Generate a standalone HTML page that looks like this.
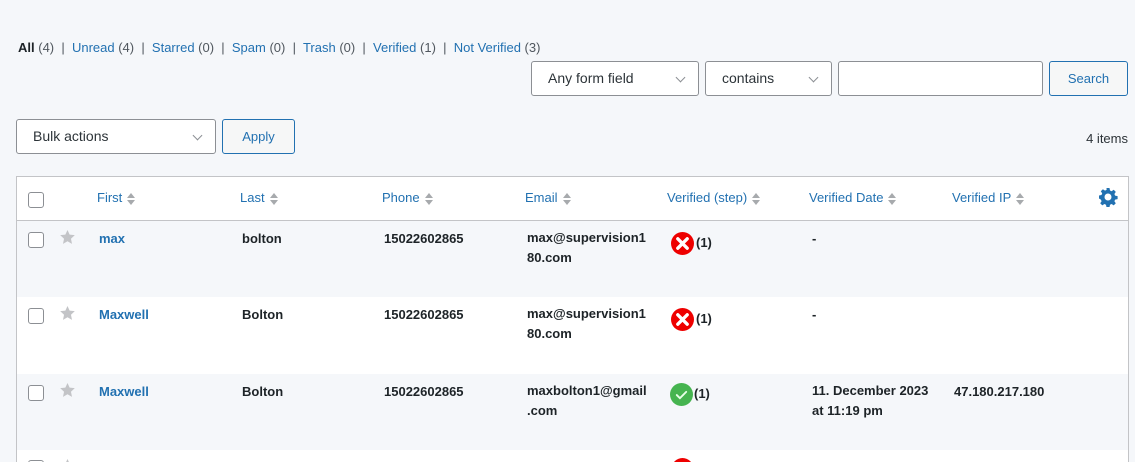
<!DOCTYPE html><html style="width:1135px;height:462px;overflow:hidden"><head><style>
*{box-sizing:border-box;margin:0;padding:0}
body{width:1135px;height:462px;overflow:hidden;background:#f5f7fa;font-family:"Liberation Sans",sans-serif;font-size:13px;color:#1d2327;position:relative}
.a{position:absolute;white-space:nowrap}
a{color:#2271b1;text-decoration:none}
.inp,.sel{position:absolute;background:#fff;border:1px solid #8c8f94;border-radius:3px;height:35px;font-size:14px;padding:8px 16px;color:#2c3338}
.sel:after{content:"";position:absolute;right:14px;top:12px;width:6px;height:6px;border-right:1.3px solid #8c8f94;border-bottom:1.3px solid #8c8f94;transform:rotate(45deg)}
.btn{position:absolute;background:#f6f7f7;border:1px solid #2271b1;border-radius:3px;height:35px;color:#2271b1;font-size:13px;text-align:center;line-height:33px}
.cb{position:absolute;width:16px;height:16px;border:1px solid #8c8f94;border-radius:3px;background:#fff;left:28px}
.sort{display:inline-block;vertical-align:middle;margin-left:5px;width:8px;height:12px;position:relative}
.sort:before{content:"";position:absolute;top:0;left:0;border:4px solid transparent;border-bottom:5px solid #a7aaad;border-top:0}
.sort:after{content:"";position:absolute;bottom:0;left:0;border:4px solid transparent;border-top:5px solid #a7aaad;border-bottom:0}
.b{font-weight:bold;font-size:13px}
.row{position:absolute;left:17px;width:1111px}
.st{position:absolute;left:60px}
</style></head><body>
<div class="a" style="left:18px;top:40px;font-size:13px;color:#50575e"><b style="color:#1d2327">All</b> (4) &nbsp;|&nbsp; <a>Unread</a> (4) &nbsp;|&nbsp; <a>Starred</a> (0) &nbsp;|&nbsp; <a>Spam</a> (0) &nbsp;|&nbsp; <a>Trash</a> (0) &nbsp;|&nbsp; <a>Verified</a> (1) &nbsp;|&nbsp; <a>Not Verified</a> (3)</div>
<div class="sel" style="left:531px;top:61px;width:168px">Any form field</div>
<div class="sel" style="left:705px;top:61px;width:127px">contains</div>
<div class="inp" style="left:838px;top:61px;width:205px"></div>
<div class="btn" style="left:1049px;top:61px;width:79px">Search</div>
<div class="sel" style="left:16px;top:119px;width:200px">Bulk actions</div>
<div class="btn" style="left:222px;top:119px;width:73px">Apply</div>
<div class="a" style="right:7px;top:131px;color:#2c3338">4 items</div>
<div style="position:absolute;left:16px;top:176px;width:1113px;height:290px;border:1px solid #c3c4c7;background:#fff"></div>
<div class="row" style="top:177px;height:44px;background:#fff;border-bottom:1px solid #c3c4c7"></div>
<div class="row" style="top:221px;height:76px;background:#f5f7fa"></div>
<div class="row" style="top:374px;height:76px;background:#f5f7fa"></div>
<div class="cb" style="top:192px"></div>
<div class="a" style="left:97px;top:190px;color:#2271b1">First<span class="sort"></span></div>
<div class="a" style="left:240px;top:190px;color:#2271b1">Last<span class="sort"></span></div>
<div class="a" style="left:382px;top:190px;color:#2271b1">Phone<span class="sort"></span></div>
<div class="a" style="left:525px;top:190px;color:#2271b1">Email<span class="sort"></span></div>
<div class="a" style="left:667px;top:190px;color:#2271b1">Verified (step)<span class="sort"></span></div>
<div class="a" style="left:809px;top:190px;color:#2271b1">Verified Date<span class="sort"></span></div>
<div class="a" style="left:952px;top:190px;color:#2271b1">Verified IP<span class="sort"></span></div>
<svg class="a" style="left:1098px;top:187px" width="20" height="20" viewBox="0 0 20 20"><path fill="#2271b1" d="M8.5 1h3l.5 2.5 1.6.7 2.1-1.4 2.1 2.1-1.4 2.1.7 1.6 2.5.5v3l-2.5.5-.7 1.6 1.4 2.1-2.1 2.1-2.1-1.4-1.6.7-.5 2.5h-3l-.5-2.5-1.6-.7-2.1 1.4-2.1-2.1 1.4-2.1-.7-1.6L1 11.5v-3l2.5-.5.7-1.6-1.4-2.1 2.1-2.1 2.1 1.4 1.6-.7zM10 6.5a3.5 3.5 0 100 7 3.5 3.5 0 000-7z"/></svg>

<div class="cb" style="top:232px"></div>
<div class="cb" style="top:308px"></div>
<div class="cb" style="top:385px"></div>
<div class="cb" style="top:460px"></div>
<svg class="st" style="top:230px" width="15" height="14" viewBox="0 0 24 23"><path fill="#c3c4c7" d="M12 0l3.5 7.5 8.5 1-6.3 5.8 1.7 8.4L12 18.5 4.6 22.7l1.7-8.4L0 8.5l8.5-1z"/></svg>
<svg class="st" style="top:306px" width="15" height="14" viewBox="0 0 24 23"><path fill="#c3c4c7" d="M12 0l3.5 7.5 8.5 1-6.3 5.8 1.7 8.4L12 18.5 4.6 22.7l1.7-8.4L0 8.5l8.5-1z"/></svg>
<svg class="st" style="top:383px" width="15" height="14" viewBox="0 0 24 23"><path fill="#c3c4c7" d="M12 0l3.5 7.5 8.5 1-6.3 5.8 1.7 8.4L12 18.5 4.6 22.7l1.7-8.4L0 8.5l8.5-1z"/></svg>
<svg class="st" style="top:459px" width="15" height="14" viewBox="0 0 24 23"><path fill="#c3c4c7" d="M12 0l3.5 7.5 8.5 1-6.3 5.8 1.7 8.4L12 18.5 4.6 22.7l1.7-8.4L0 8.5l8.5-1z"/></svg>

<div class="a b" style="left:99px;top:231px;color:#2271b1">max</div>
<div class="a b" style="left:242px;top:231px">bolton</div>
<div class="a b" style="left:384px;top:231px">15022602865</div>
<div class="a b" style="left:527px;top:228px;line-height:20px">max@supervision1<br>80.com</div>
<div class="a b" style="left:812px;top:231px">-</div>

<div class="a b" style="left:99px;top:307px;color:#2271b1">Maxwell</div>
<div class="a b" style="left:242px;top:307px">Bolton</div>
<div class="a b" style="left:384px;top:307px">15022602865</div>
<div class="a b" style="left:527px;top:304px;line-height:20px">max@supervision1<br>80.com</div>
<div class="a b" style="left:812px;top:307px">-</div>

<div class="a b" style="left:99px;top:384px;color:#2271b1">Maxwell</div>
<div class="a b" style="left:242px;top:384px">Bolton</div>
<div class="a b" style="left:384px;top:384px">15022602865</div>
<div class="a b" style="left:527px;top:381px;line-height:20px">maxbolton1@gmail<br>.com</div>
<div class="a b" style="left:812px;top:381px;line-height:20px">11. December 2023<br>at 11:19 pm</div>
<div class="a b" style="left:954px;top:384px">47.180.217.180</div>

<svg class="a" style="left:671px;top:232px" width="23" height="23" viewBox="0 0 22 22"><circle cx="11" cy="11" r="11" fill="#e00"/><path d="M6.5 6.5l9 9M15.5 6.5l-9 9" stroke="#fff" stroke-width="3.2" stroke-linecap="round"/></svg>
<div class="a b" style="left:696px;top:235px">(1)</div>
<svg class="a" style="left:671px;top:308px" width="23" height="23" viewBox="0 0 22 22"><circle cx="11" cy="11" r="11" fill="#e00"/><path d="M6.5 6.5l9 9M15.5 6.5l-9 9" stroke="#fff" stroke-width="3.2" stroke-linecap="round"/></svg>
<div class="a b" style="left:696px;top:311px">(1)</div>
<svg class="a" style="left:670px;top:383px" width="23" height="23" viewBox="0 0 22 22"><circle cx="11" cy="11" r="11" fill="#46b450"/><path d="M6.5 11.5l3 3 6-6" stroke="#e8ffe8" stroke-width="1.8" fill="none" stroke-linecap="round"/></svg>
<div class="a b" style="left:694px;top:386px">(1)</div>
<svg class="a" style="left:671px;top:458px" width="23" height="4" viewBox="0 0 22 4"><circle cx="11" cy="11" r="11" fill="#e00"/></svg>
</body></html>
